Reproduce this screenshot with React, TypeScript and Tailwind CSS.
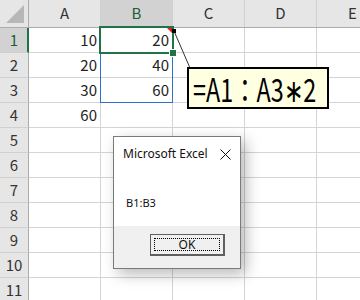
import React from "react";

const cols = ["A", "B", "C", "D", "E"];
const data: Record<number, string[]> = {
  1: ["10", "20"],
  2: ["20", "40"],
  3: ["30", "60"],
  4: ["60", ""],
};

export default function App() {
  const rows = Array.from({ length: 11 }, (_, i) => i + 1);

  return (
    <div className="relative w-[360px] h-[300px] overflow-hidden bg-white font-['Noto_Sans_CJK_JP',sans-serif]">
      {/* column headers */}
      <div className="flex h-[28px] border-b border-[#ababab] bg-[#e6e6e6]">
        <div className="relative w-[29px] shrink-0 border-r border-[#ababab]">
          <div className="absolute right-[4px] bottom-[4px] w-0 h-0 border-l-[18px] border-l-transparent border-b-[18px] border-b-[#b7b7b7]" />
        </div>
        {cols.map((c) => (
          <div
            key={c}
            className={`w-[72px] shrink-0 border-r border-[#d0d0d0] flex items-center justify-center text-[15px] ${
              c === "B" ? "bg-[#d2d2d2] text-[#1d5c37]" : "text-[#333]"
            }`}
          >
            {c}
          </div>
        ))}
      </div>

      {/* rows */}
      {rows.map((r) => (
        <div key={r} className="flex h-[25px]">
          <div
            className={`w-[29px] shrink-0 flex items-center justify-center border-b border-[#d0d0d0] text-[15px] ${
              r === 1
                ? "bg-[#d2d2d2] text-[#1d5c37] border-r-2 border-r-[#217346] pl-[1px]"
                : "bg-[#e6e6e6] text-[#333] border-r border-r-[#ababab]"
            }`}
          >
            {r}
          </div>
          {cols.map((c, ci) => (
            <div
              key={c}
              className="w-[72px] shrink-0 border-r border-b border-[#d4d4d4] flex items-center justify-end pr-[3px] text-[15px] text-[#222]"
            >
              {data[r]?.[ci] ?? ""}
            </div>
          ))}
        </div>
      ))}

      {/* selection B1:B3 */}
      <div className="absolute left-[100px] top-[27px] w-[73px] h-[76px] border border-[#2f6fd3]" />
      <div className="absolute left-[99px] top-[26px] w-[75px] h-[28px] border-2 border-[#217346]" />
      <div className="absolute left-[170px] top-[50px] w-[6px] h-[6px] bg-[#217346] outline outline-1 outline-white" />
      <div className="absolute left-[167px] top-[28px] w-0 h-0 border-l-[5px] border-l-transparent border-t-[5px] border-t-[#e02020]" />

      {/* comment connector */}
      <svg className="absolute left-0 top-0" width="360" height="300">
        <line x1="174" y1="31" x2="190" y2="68" stroke="#333" strokeWidth="1" />
        <rect x="172" y="29" width="4" height="4" fill="#000" />
      </svg>

      {/* comment box */}
      <div className="absolute left-[187px] top-[67px] w-[142px] h-[42px] border-2 border-black bg-[#ffffe1] flex items-center pl-[4px]">
        <span className="inline-block origin-left scale-x-[0.73] text-[32px] leading-none text-black whitespace-nowrap">
          =A1：A3∗2
        </span>
      </div>

      {/* message box */}
      <div className="absolute left-[113px] top-[136px] w-[128px] h-[133px] border border-[#7a7a7a] bg-white flex flex-col shadow-[5px_5px_14px_rgba(0,0,0,0.28)] font-['Noto_Sans',sans-serif]">
        <div className="flex items-center justify-between h-[32px] pl-[9px] pr-[9px] pt-[2px]">
          <span className="text-[12px] text-[#111]">Microsoft Excel</span>
          <svg width="11" height="11" viewBox="0 0 11 11">
            <path d="M0.5 0.5 L10.5 10.5 M10.5 0.5 L0.5 10.5" stroke="#111" strokeWidth="1" />
          </svg>
        </div>
        <div className="h-[57px] flex items-center pl-[12px] pt-[12px] text-[11px] text-[#111]">B1:B3</div>
        <div className="flex-1 bg-[#f0f0f0] flex items-start justify-end pt-[8px] pr-[15px]">
          <div className="w-[75px] h-[22px] border border-[#5f5f5f] border-r-2 border-b-2 bg-[#f0f0f0] p-[3px]">
            <div className="h-full border border-dotted border-black flex items-center justify-center text-[12px] text-[#111]">
              OK
            </div>
          </div>
        </div>
      </div>
    </div>
  );
}
